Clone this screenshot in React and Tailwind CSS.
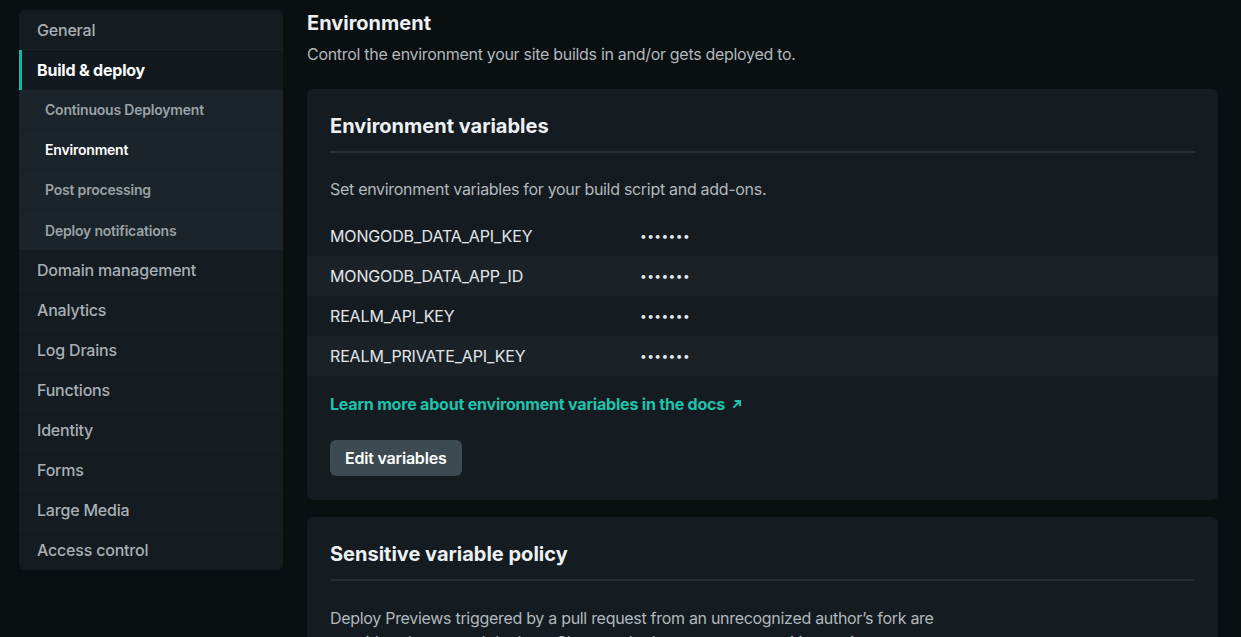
import { useState } from "react";

const mainItems = [
  "Domain management",
  "Analytics",
  "Log Drains",
  "Functions",
  "Identity",
  "Forms",
  "Large Media",
  "Access control",
];

const subItems = ["Continuous Deployment", "Environment", "Post processing", "Deploy notifications"];

const vars = ["MONGODB_DATA_API_KEY", "MONGODB_DATA_APP_ID", "REALM_API_KEY", "REALM_PRIVATE_API_KEY"];

const Sidebar = () => {
  const [active] = useState("Environment");
  return (
    <nav className="w-[264px] shrink-0 self-start mt-[1px] rounded-md bg-[#141c22] overflow-hidden tracking-[-0.2px]">
      <div className="h-10 flex items-center pl-[18px] text-[16px] font-medium text-[#a9b0b5] border-b border-[#1a2228]">
        General
      </div>
      <div className="h-10 flex items-center pl-[15px] text-[16px] font-bold text-white border-l-[3px] border-[#14b8a0] bg-[#121a1f]">
        Build &amp; deploy
      </div>
      <div className="bg-[#1b242a]">
        {subItems.map((s) => (
          <div
            key={s}
            className={`h-10 flex items-center pl-[26px] text-[14px] font-semibold border-b border-[#182026] last:border-b-0 ${
              s === active ? "text-white" : "text-[#9aa2a8]"
            }`}
          >
            {s}
          </div>
        ))}
      </div>
      {mainItems.map((m) => (
        <div
          key={m}
          className="h-10 flex items-center pl-[18px] text-[16px] font-medium text-[#a9b0b5] border-b border-[#192127] last:border-b-0"
        >
          {m}
        </div>
      ))}
    </nav>
  );
};

const Card = ({ title, children }) => (
  <section className="rounded-md bg-[#141c22] pt-[23px] pb-[24px]">
    <div className="mx-[23px] pb-[11px] border-b-2 border-[#252e34]">
      <h2 className="text-[20px] font-bold text-[#eef1f3] leading-[28px]">{title}</h2>
    </div>
    {children}
  </section>
);

const App = () => {
  return (
    <div
      className="h-[637px] overflow-hidden bg-[#0a0f12] flex items-start gap-6 pl-[19px] pr-[23px] pt-[9px]"
      style={{ fontFamily: "Inter, 'Liberation Sans', sans-serif" }}
    >
      <Sidebar />
      <main className="flex-1 min-w-0">
        <h1 className="text-[20px] font-bold text-[#eef1f3] leading-[26px] mt-[1px]">Environment</h1>
        <p className="text-[16px] text-[#b2b8bc] mt-[7px] leading-[22px] tracking-[-0.3px]">
          Control the environment your site builds in and/or gets deployed to.
        </p>

        <div className="mt-[24px] flex flex-col gap-[17px]">
          <Card title="Environment variables">
            <p className="mx-[23px] mt-[25px] text-[16px] text-[#b2b8bc] leading-[22px] tracking-[-0.3px]">
              Set environment variables for your build script and add-ons.
            </p>
            <div className="mt-[16px]">
              {vars.map((v, i) => (
                <div
                  key={v}
                  className={`h-10 flex items-center px-[23px] text-[16px] text-[#e3e7ea] tracking-[-0.15px] ${
                    i % 2 === 1 ? "bg-[#1a2228]" : ""
                  }`}
                >
                  <span className="w-[310px]">{v}</span>
                  <span className="text-[12px] tracking-[0.4px]">•••••••</span>
                </div>
              ))}
            </div>
            <a className="mx-[23px] mt-[16px] inline-flex items-center gap-[6px] text-[16px] font-bold text-[#1fc2aa] tracking-[-0.2px]">
              Learn more about environment variables in the docs
              <svg width="12" height="12" viewBox="0 0 12 12" fill="none" stroke="currentColor" strokeWidth="2" strokeLinecap="round">
                <path d="M3 9L9 3M4.5 3H9V7.5" />
              </svg>
            </a>
            <div className="mx-[23px] mt-[24px]">
              <button className="h-9 px-[15px] rounded-md bg-[#3e4a51] text-[16px] font-semibold text-white tracking-[-0.2px]">
                Edit variables
              </button>
            </div>
          </Card>

          <Card title="Sensitive variable policy">
            <p className="mx-[23px] mt-[25px] text-[16px] text-[#b2b8bc] leading-[24px] max-w-[610px] tracking-[-0.3px]">
              Deploy Previews triggered by a pull request from an unrecognized author’s fork are considered untrusted
              deploys. Choose whether to expose sensitive environment variables.
            </p>
          </Card>
        </div>
      </main>
    </div>
  );
};

export default App;
